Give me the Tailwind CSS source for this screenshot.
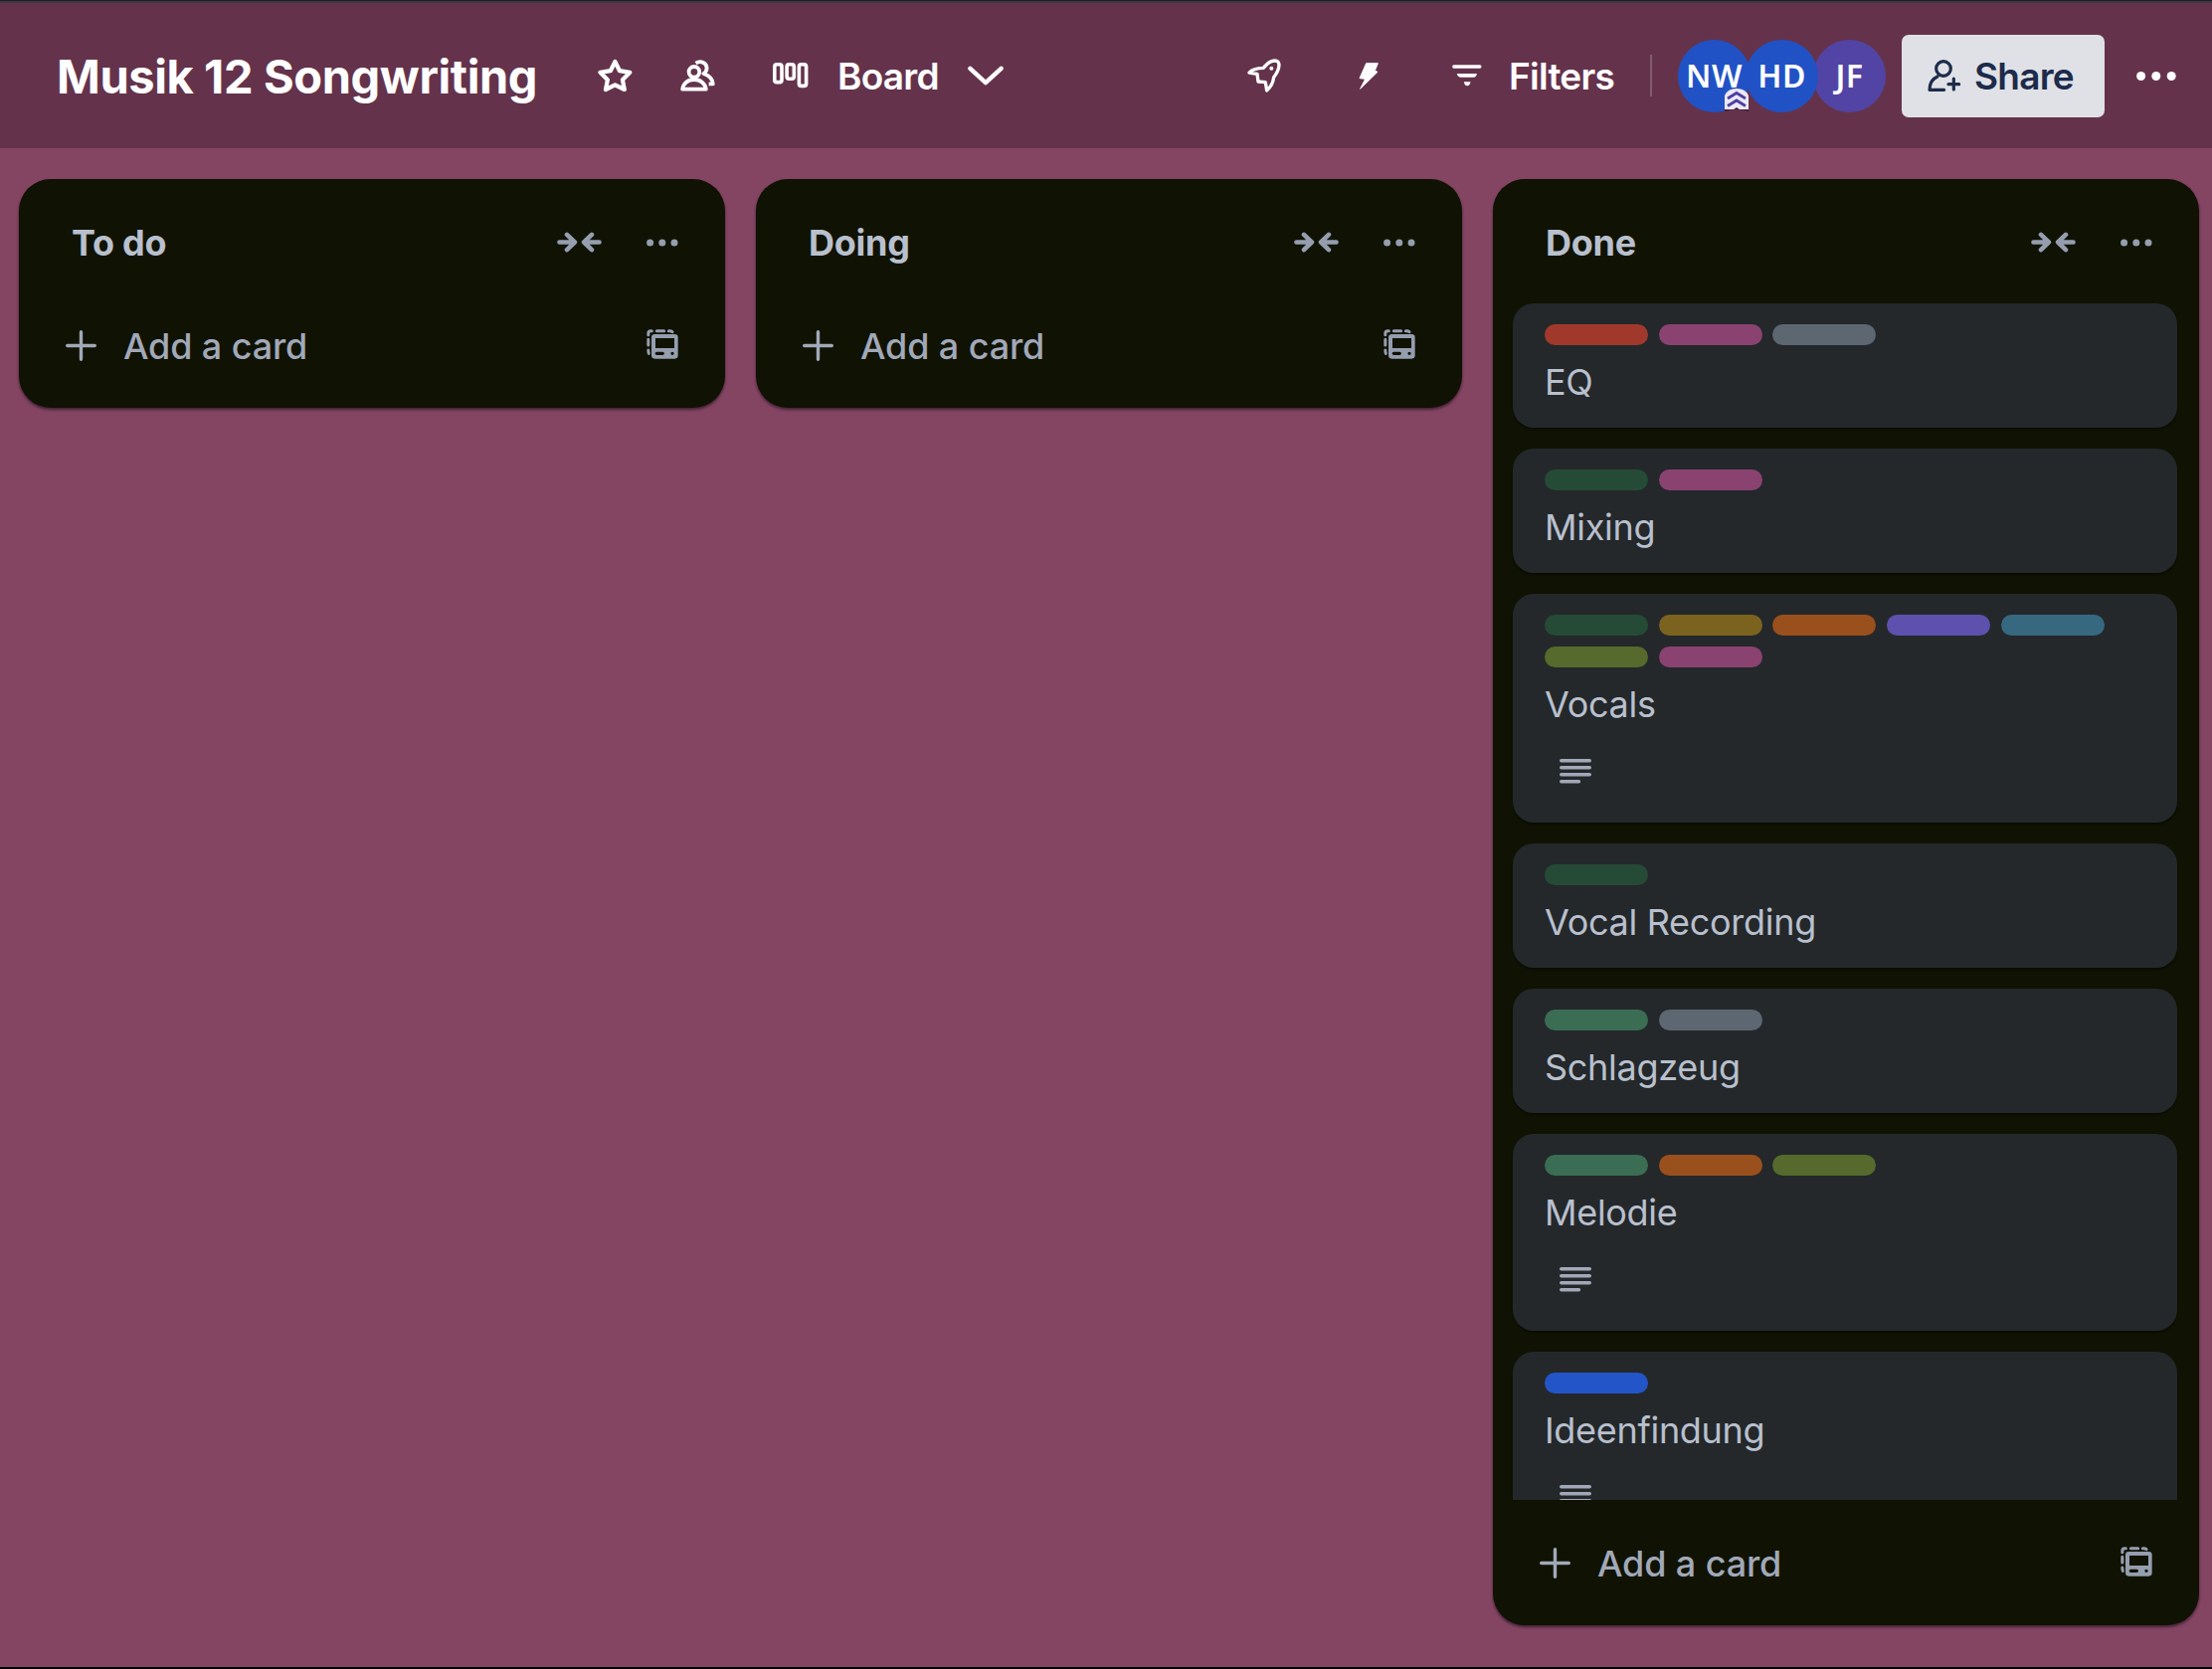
<!DOCTYPE html>
<html lang="en">
<head>
<meta charset="utf-8">
<title>Musik 12 Songwriting</title>
<script src="https://cdn.jsdelivr.net/npm/@tailwindcss/browser@4"></script>
</head>
<body class="h-[1678px] w-[2224px] overflow-hidden bg-[#844563] font-['Inter',sans-serif]">
<!-- shared icons -->
<svg class="hidden">
  <symbol id="collapse" viewBox="59 68 136 64"><path d="M66 100H112M89 77L113 100L89 123M188 100H142M165 77L141 100L165 123" fill="none" stroke="currentColor" stroke-width="14" stroke-linecap="round" stroke-linejoin="round"/></symbol>
  <symbol id="template" viewBox="330 363 96 90"><g fill="none" stroke="currentColor" stroke-width="9" stroke-linecap="round"><path d="M335.5 380V376Q335.5 368.5 343 368.5H346M361 368.5H383M397 368.5H401Q405 368.5 408 371M335.5 394V411M335.5 426Q335.5 433 337 436"/></g><path fill="currentColor" fill-rule="evenodd" d="M355 378H415Q425 378 425 388V442Q425 452 415 452H355Q345 452 345 442V388Q345 378 355 378ZM357 390V420H414V390ZM361 431A5 5 0 0 0 361 441H379A5 5 0 0 0 379 431ZM408 431A5 5 0 0 0 408 441A5 5 0 0 0 408 431Z"/></symbol>
  <symbol id="plus" viewBox="0 0 31 31"><path d="M15.5 1.7V29.3M1.7 15.5H29.3" fill="none" stroke="currentColor" stroke-width="3.4" stroke-linecap="round"/></symbol>
  <symbol id="desc" viewBox="0 0 32 25"><path d="M1.7 1.7H30.3M1.7 8.7H30.3M1.7 15.7H30.3M1.7 22.7H19.5" fill="none" stroke="currentColor" stroke-width="3.4" stroke-linecap="round"/></symbol>
</svg>

<div class="flex h-full flex-col border-b-2 border-black">
  <div class="h-[3px] shrink-0 border-b-2 border-[#3d383f] bg-[#1c2025]"></div>

  <header class="flex h-[146px] shrink-0 items-center bg-[#64334b] pr-9 pl-[57px] text-[37px] font-semibold tracking-[-0.75px] text-white">
    <h1 class="w-[544px] text-[47px] leading-none font-bold tracking-[-0.4px] whitespace-nowrap">Musik 12 Songwriting</h1>
    <svg class="h-[34px] w-[35px]" viewBox="0 0 35 34"><path d="M17.4 3L22 12.2L32.3 13.8L24.9 21.2L26.8 31L17.4 26.4L8 31L9.9 21.2L2.5 13.8L12.8 12.2Z" fill="none" stroke="currentColor" stroke-width="4.2" stroke-linejoin="round"/></svg>
    <svg class="ml-12 h-8 w-[35px]" viewBox="0 0 35 32"><g fill="none" stroke="currentColor" stroke-width="3.8" stroke-linecap="round" stroke-linejoin="round"><circle cx="13.9" cy="12.3" r="5.3"/><path d="M2.2 29.7C2.8 24 7.5 20 13.9 20S25 24 25.8 29.7Z"/><path stroke-linecap="butt" d="M15.6 3.6C19.8 .5 26.6 2.8 26.6 8.6C26.6 11.2 25 13 23.4 14C28.8 15.8 32.4 19.6 32.8 24.3H28.6"/></g></svg>
    <svg class="ml-[58px] h-[26px] w-9" viewBox="0 0 36 26"><g fill="none" stroke="currentColor" stroke-width="3.6"><rect x="1.8" y="1.8" width="7.2" height="17.8" rx="2.2"/><rect x="14.1" y="1.8" width="7.2" height="14.4" rx="2.2"/><rect x="26.4" y="1.8" width="7.2" height="21.6" rx="2.2"/></g></svg>
    <span class="ml-[29px] w-[131px] pt-[2px]">Board</span>
    <svg class="h-5 w-9" viewBox="0 0 36 20"><path d="M2.4 2.8L18 17.2L33.6 2.8" fill="none" stroke="currentColor" stroke-width="4.4" stroke-linecap="round" stroke-linejoin="round"/></svg>

    <div class="ml-auto flex items-center">
      <svg class="h-[34px] w-[34px]" viewBox="101 177 102 102"><path d="M107 219Q118 206 150 205Q160 190 174 185Q196 178 197 196Q196 214 181 233Q178 258 160 273L156 248L134 246L131 223Z" fill="none" stroke="currentColor" stroke-width="10" stroke-linejoin="round"/><circle cx="174" cy="206" r="6" fill="currentColor"/></svg>
      <svg class="ml-[78px] h-[27px] w-5" viewBox="437 187 60 81"><path d="M460 189H495L486 211L494 215L442 266L457 236L440 234Z" fill="currentColor" stroke="currentColor" stroke-width="3" stroke-linejoin="round"/></svg>
      <svg class="ml-[74px] h-[22px] w-[30px]" viewBox="720 196 89 66"><path d="M725 202H803" stroke="currentColor" stroke-width="10" stroke-linecap="round"/><path d="M734 223H794Q793 234 784 234H744Q736 233 734 223Z" fill="currentColor"/><path d="M755 248H775Q773 260 765 260T755 248Z" fill="currentColor"/></svg>
      <span class="ml-[27px] w-[142px] pt-[2px]">Filters</span>
      <span class="h-[42px] w-[2px] bg-white/20"></span>
      <div class="ml-[26px] flex font-['Noto_Sans',sans-serif] text-[32px] tracking-[0.5px]">
        <div class="relative z-20 flex size-[73px] items-center justify-center rounded-full bg-[#2052c6]">NW
          <svg class="absolute top-[49px] left-[47px] h-6 w-6" viewBox="0 0 24 24"><path d="M0 23V8Q12 -8 24 8V23Q12 19 0 23Z" fill="#3d1c31"/><path d="M0 21V7Q3 0 12 0T24 7V21H15L12 19L9 21Z" fill="#ece8f8"/><path d="M3 10L12 4.5L21 10M3 17.5L12 12L21 17.5" fill="none" stroke="#4d3fa0" stroke-width="2.8"/></svg>
        </div>
        <div class="relative z-10 -ml-[5px] flex size-[73px] items-center justify-center rounded-full bg-[#2052c6]">HD</div>
        <div class="-ml-[5px] flex size-[73px] items-center justify-center rounded-full bg-[#5244a5]">JF</div>
      </div>
      <button class="ml-4 flex h-[83px] w-[204px] items-center rounded-[7px] bg-[#dfe1e6] pl-[26px] text-[#1d2b4b]">
        <svg class="h-8 w-[34px]" viewBox="774 90 102 96"><g fill="none" stroke="currentColor" stroke-width="9.5" stroke-linecap="round" stroke-linejoin="round"><circle cx="822" cy="117" r="22"/><path d="M824 181H780C780 160 788 148 804 141M853 147V180M837 164H869"/></g></svg>
        <span class="ml-[13px] pt-[2px]">Share</span>
      </button>
      <svg class="ml-8 h-[9px] w-10" viewBox="0 0 40 9"><g fill="currentColor"><circle cx="4.6" cy="4.5" r="4.5"/><circle cx="19.8" cy="4.5" r="4.5"/><circle cx="35.2" cy="4.5" r="4.5"/></g></svg>
    </div>
  </header>

  <main id="board" class="flex items-start gap-[31px] pt-[31px] pl-[19px]"></main>
</div>

<script>
  const colors = {
    red: 'bg-[#a0392c]', pink: 'bg-[#8a4271]', gray: 'bg-[#5c6771]', darkgreen: 'bg-[#254b36]',
    yellow: 'bg-[#7c621f]', orange: 'bg-[#9a501c]', purple: 'bg-[#5e50ad]', sky: 'bg-[#36697f]',
    lime: 'bg-[#556a2c]', green: 'bg-[#3a6d53]', blue: 'bg-[#2455c8]'
  };
  const lists = [
    { name: 'To do' },
    { name: 'Doing' },
    { name: 'Done', cards: [
      { title: 'EQ', labels: ['red', 'pink', 'gray'] },
      { title: 'Mixing', labels: ['darkgreen', 'pink'] },
      { title: 'Vocals', labels: ['darkgreen', 'yellow', 'orange', 'purple', 'sky', 'lime', 'pink'], desc: true },
      { title: 'Vocal Recording', labels: ['darkgreen'] },
      { title: 'Schlagzeug', labels: ['green', 'gray'] },
      { title: 'Melodie', labels: ['green', 'orange', 'lime'], desc: true },
      { title: 'Ideenfindung', labels: ['blue'], desc: true }
    ] }
  ];
  const card = c => `
    <article class="shrink-0 rounded-[21px] bg-[#24282b] px-8 pt-[21px] pb-5 shadow-[0_2px_2px_rgba(0,0,0,0.35)]">
      <div class="flex flex-wrap gap-x-[10.7px] gap-y-[11px]">${c.labels.map(l => `<span class="h-[21px] w-[104px] rounded-full ${colors[l]}"></span>`).join('')}</div>
      <h3 class="mt-[11px] text-[36px] leading-[52px] tracking-[-0.3px] text-[#b9c0cd]">${c.title}</h3>
      ${c.desc ? '<svg class="mt-[29px] mb-[19px] ml-[15px] h-[25px] w-8 text-[#a1a9b8]"><use href="#desc"/></svg>' : ''}
    </article>`;
  document.getElementById('board').innerHTML = lists.map(l => `
    <section class="flex w-[710px] shrink-0 flex-col rounded-[32px] bg-[#101204] shadow-[0_2px_3px_rgba(20,10,20,0.6)]">
      <div class="flex h-[104px] items-center pt-[23px] pr-[47px] pl-[53px] text-[#959eae]">
        <h2 class="grow pt-px text-[36px] font-bold tracking-[-0.25px] text-[#b9c0cd]">${l.name}</h2>
        <svg class="h-[21px] w-[45px]"><use href="#collapse"/></svg>
        <svg class="ml-[45px] h-2 w-8 overflow-visible fill-current" viewBox="0 0 32 8"><circle cx="3.6" cy="4" r="3.5"/><circle cx="15.8" cy="4" r="3.5"/><circle cx="28" cy="4" r="3.5"/></svg>
      </div>
      ${l.cards ? `<div class="flex h-[1224px] flex-col gap-[21px] overflow-hidden pt-[21px] pr-[22px] pl-5">${l.cards.map(card).join('')}</div>` : ''}
      <div class="flex h-[126px] items-center pr-[47px] pl-[47px] text-[#a1a9b8]">
        <svg class="h-[31px] w-[31px]"><use href="#plus"/></svg>
        <span class="ml-[27px] grow pt-px text-[36px] font-medium tracking-[-0.12px]">Add a card</span>
        <svg class="mb-[2px] h-[30px] w-8 text-[#959eae]"><use href="#template"/></svg>
      </div>
    </section>`).join('');
</script>
</body>
</html>
